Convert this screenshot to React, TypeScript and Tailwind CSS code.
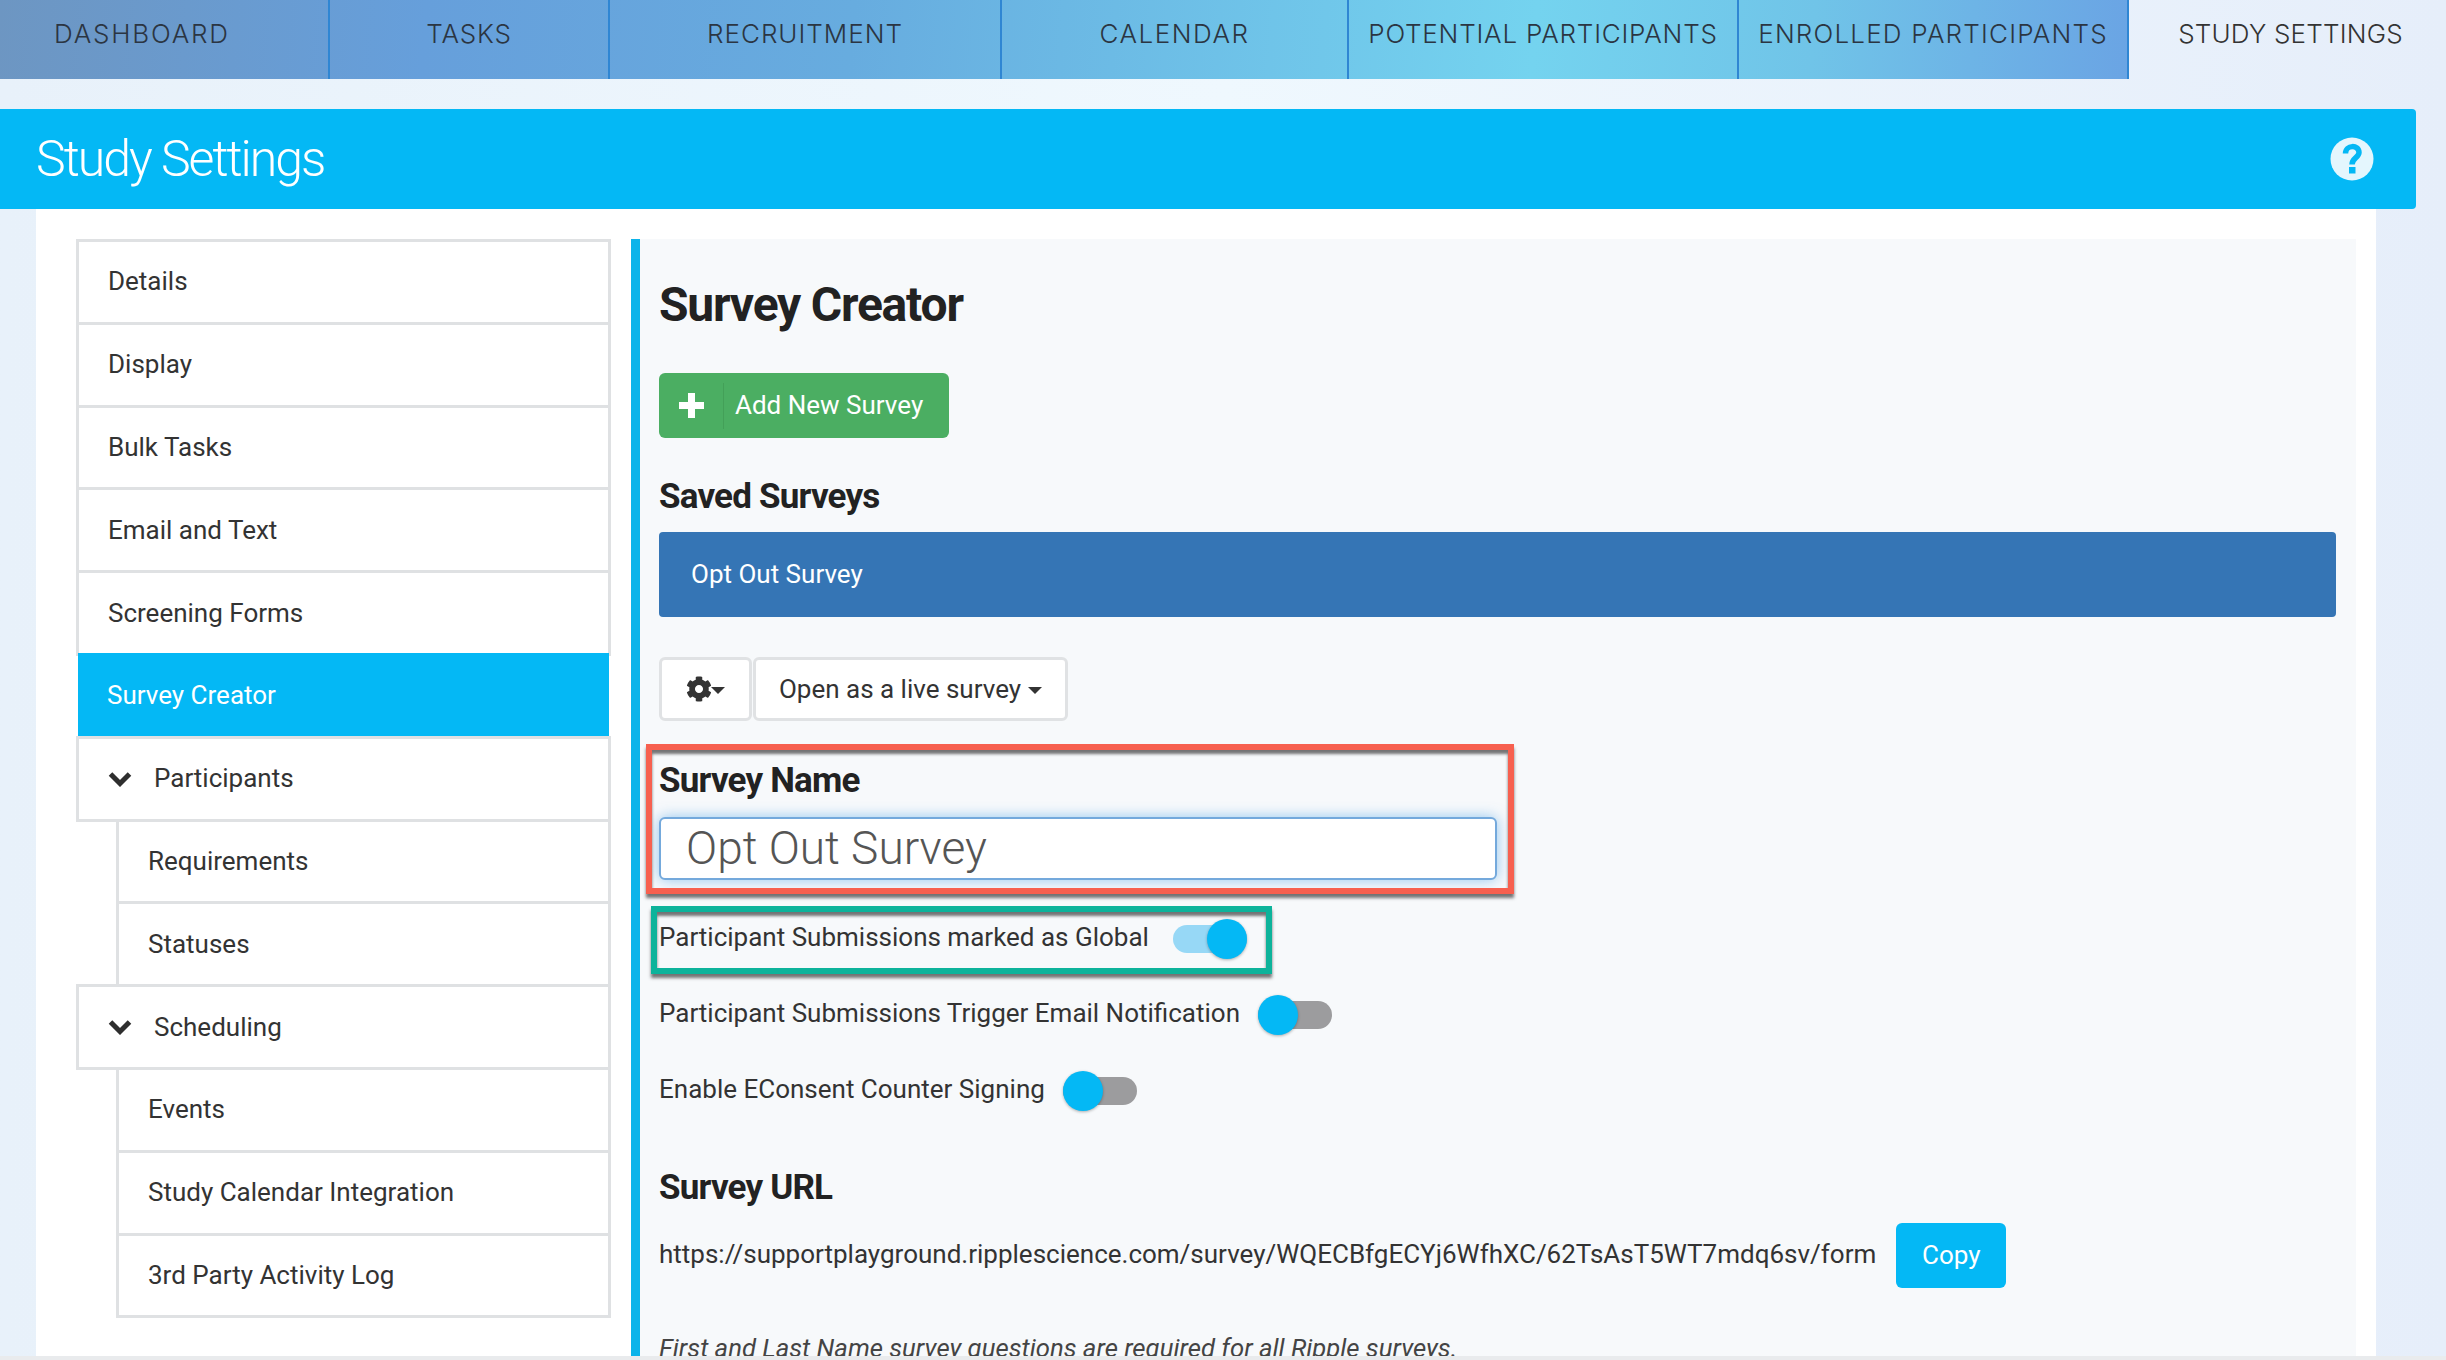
const TABS = [
  { label: "DASHBOARD", width: "w-[330px]", pad: "pl-[54px] justify-start", track: "tracking-[1.8px]" },
  { label: "TASKS", width: "w-[280px]", pad: "justify-center", track: "tracking-[0.8px]" },
  { label: "RECRUITMENT", width: "w-[392px]", pad: "justify-center", track: "tracking-[1px]" },
  { label: "CALENDAR", width: "w-[347px]", pad: "justify-center", track: "tracking-[1.5px]" },
  { label: "POTENTIAL PARTICIPANTS", width: "w-[390px]", pad: "justify-center", track: "tracking-[0.8px]" },
  { label: "ENROLLED PARTICIPANTS", width: "w-[390px]", pad: "justify-center", track: "tracking-[1.2px]" },
];

const SIDE_ITEMS = [
  { label: "Details" },
  { label: "Display" },
  { label: "Bulk Tasks" },
  { label: "Email and Text" },
  { label: "Screening Forms" },
  { label: "Survey Creator", active: true },
  { label: "Participants", group: true },
  { label: "Requirements", sub: true },
  { label: "Statuses", sub: true },
  { label: "Scheduling", group: true },
  { label: "Events", sub: true },
  { label: "Study Calendar Integration", sub: true },
  { label: "3rd Party Activity Log", sub: true },
];

function SideRow({ item }: { item: (typeof SIDE_ITEMS)[0] }) {
  if (item.active) {
    return (
      <div className="h-[85.8px] -mt-[3px] ml-[2px] mr-[2px] bg-[#04b8f5] text-white flex items-center pl-[29px]">
        {item.label}
      </div>
    );
  }
  return (
    <div
      className={`h-[85.8px] -mt-[3px] first:mt-0 border-[3px] border-[#dfe1e3] bg-white text-[#333] flex items-center ${
        item.sub ? "ml-[40px] pl-[29px]" : "pl-[29px]"
      }`}
    >
      {item.group && (
        <svg viewBox="0 0 24 16" className="w-[24px] h-[16px] mr-[22px]">
          <path d="M2.5 3 L12 12.5 L21.5 3" fill="none" stroke="#2e2e2e" strokeWidth="5" />
        </svg>
      )}
      {item.label}
    </div>
  );
}

function Toggle({ on }: { on?: boolean }) {
  return (
    <div className="relative w-[74px] h-[40px] flex items-center shrink-0">
      <div className={`w-full h-[28px] rounded-full ${on ? "bg-[#97d8f6]" : "bg-[#9c9c9e]"}`} />
      <div
        className={`absolute top-0 w-[40px] h-[40px] rounded-full bg-[#04b8f5] shadow-[0_1px_3px_rgba(0,0,0,0.3)] ${
          on ? "right-0" : "left-0"
        }`}
      />
    </div>
  );
}

function Caret({ className }: { className: string }) {
  return (
    <span
      className={`inline-block w-0 h-0 border-x-[7px] border-x-transparent border-t-[7px] border-t-[#333] ${className}`}
    />
  );
}

function GearIcon() {
  return (
    <svg viewBox="0 0 512 512" className="w-[26px] h-[26px]" fill="#333">
      <path d="M487.4 315.7l-42.6-24.6c4.3-23.2 4.3-47 0-70.2l42.6-24.6c4.9-2.8 7.1-8.6 5.5-14-11.1-35.6-30-67.8-54.7-94.6-3.8-4.1-10-5.1-14.8-2.3L380.8 110c-17.9-15.4-38.5-27.3-60.8-35.1V25.8c0-5.6-3.9-10.5-9.4-11.7-36.7-8.2-74.3-7.8-109.2 0-5.5 1.2-9.4 6.1-9.4 11.7V75c-22.2 7.9-42.8 19.8-60.8 35.1L88.7 85.5c-4.9-2.8-11-1.9-14.8 2.3-24.7 26.7-43.6 58.9-54.7 94.6-1.7 5.4.6 11.2 5.5 14L67.3 221c-4.3 23.2-4.3 47 0 70.2l-42.6 24.6c-4.9 2.8-7.1 8.6-5.5 14 11.1 35.6 30 67.8 54.7 94.6 3.8 4.1 10 5.1 14.8 2.3l42.6-24.6c17.9 15.4 38.5 27.3 60.8 35.1v49.2c0 5.6 3.9 10.5 9.4 11.7 36.7 8.2 74.3 7.8 109.2 0 5.5-1.2 9.4-6.1 9.4-11.7v-49.2c22.2-7.9 42.8-19.8 60.8-35.1l42.6 24.6c4.9 2.8 11 1.9 14.8-2.3 24.7-26.7 43.6-58.9 54.7-94.6 1.5-5.5-.7-11.3-5.6-14.1zM256 336c-44.1 0-80-35.9-80-80s35.9-80 80-80 80 35.9 80 80-35.9 80-80 80z" />
    </svg>
  );
}

export default function App() {
  return (
    <div
      className="relative w-[2446px] h-[1360px] overflow-hidden bg-gradient-to-r from-[#e8f1fa] via-[#eff8fe] to-[#e6eefa] text-[26px] text-[#333]"
      style={{ fontFamily: "Roboto, 'Liberation Sans', sans-serif" }}
    >
      {/* Top tabs */}
      <nav className="flex h-[79px]">
        <div className="flex bg-[linear-gradient(95deg,#6d96c2_0%,#669fdb_20%,#67acdf_40%,#74d3ef_72%,#70c4e8_85%,#6aa4e4_100%)]">
          {TABS.map((tab) => (
            <div
              key={tab.label}
              className={`${tab.width} ${tab.pad} ${tab.track} flex items-center pb-[12px] border-r-2 border-[#2f86d3] text-[26px] font-light text-[#2b3542]`}
              style={{ fontFamily: "Inter, sans-serif" }}
            >
              {tab.label}
            </div>
          ))}
        </div>
        <div
          className="flex-1 flex items-center justify-center pb-[12px] pl-[6px] text-[26px] font-light text-[#333] tracking-[0.2px]"
          style={{ fontFamily: "Inter, sans-serif" }}
        >
          STUDY SETTINGS
        </div>
      </nav>

      {/* Blue page header */}
      <header className="mt-[30px] w-[2416px] h-[100px] bg-[#04b8f5] rounded-r-[4px] flex items-center justify-between pl-[36px] pr-[42px]">
        <h1 className="text-[50px] font-light text-white tracking-[-2px]">Study Settings</h1>
        <svg viewBox="0 0 44 44" className="w-[44px] h-[44px]">
          <circle cx="22" cy="22" r="21.5" fill="#e4f6fd" />
          <path
            d="M15.5 16.5 C15.5 7.5 29 7.5 29 15.5 C29 20.5 22 21 22 27.5"
            fill="none"
            stroke="#04b8f5"
            strokeWidth="5.5"
          />
          <rect x="19" y="30" width="6.5" height="6.5" fill="#04b8f5" />
        </svg>
      </header>

      <main className="ml-[36px] w-[2340px] h-[1147px] bg-white flex pt-[30px] pl-[40px]">
        {/* Sidebar */}
        <aside className="w-[535px] shrink-0">
          {SIDE_ITEMS.map((item) => (
            <SideRow key={item.label} item={item} />
          ))}
        </aside>

        {/* Survey creator panel */}
        <section className="ml-[20px] w-[1725px] border-l-[9px] border-[#0cb4ea] bg-[#f7f9fb] pl-[19px] overflow-hidden">
          <h2 className="mt-[41px] h-[50px] leading-[50px] text-[48px] font-bold text-[#222] tracking-[-1.2px]">
            Survey Creator
          </h2>

          <button className="mt-[43px] w-[290px] h-[65px] rounded-[6px] bg-[#4bae62] text-white flex items-center">
            <span className="w-[65px] h-[46px] flex items-center justify-center border-r border-[#43a058]">
              <svg viewBox="0 0 25 25" className="w-[25px] h-[25px]">
                <path d="M9 0h7v9h9v7h-9v9H9v-9H0V9h9z" fill="#fff" />
              </svg>
            </span>
            <span className="ml-[11px]">Add New Survey</span>
          </button>

          <h3 className="mt-[39px] h-[40px] leading-[40px] text-[35px] font-bold text-[#222] tracking-[-0.8px]">
            Saved Surveys
          </h3>
          <div className="mt-[15px] w-[1677px] h-[85px] rounded-[4px] bg-[#3575b5] text-white flex items-center pl-[32px]">
            Opt Out Survey
          </div>

          <div className="mt-[40px] h-[64px] flex gap-[1px]">
            <button className="w-[93px] rounded-[6px] border-[3px] border-[#e0e2e4] bg-white flex items-center justify-center">
              <GearIcon />
              <Caret className="ml-[-1px] mt-[3px]" />
            </button>
            <button className="w-[315px] rounded-[6px] border-[3px] border-[#e0e2e4] bg-white flex items-center justify-center">
              Open as a live survey
              <Caret className="ml-[7px] mt-[3px]" />
            </button>
          </div>

          <h3 className="mt-[40px] h-[40px] leading-[40px] text-[35px] font-bold text-[#222] tracking-[-0.8px]">
            Survey Name
          </h3>
          <div className="mt-[16px] w-[838px] h-[63px] rounded-[6px] border-2 border-[#74a9dc] bg-white shadow-[0_0_14px_rgba(102,175,233,0.7)] flex items-center pl-[25px] text-[46px] font-light text-[#555]">
            Opt Out Survey
          </div>

          <div className="mt-[39px] flex items-center gap-[24px]">
            <span className="-mt-[3px]">Participant Submissions marked as Global</span>
            <Toggle on />
          </div>
          <div className="mt-[36px] flex items-center gap-[18px]">
            <span className="-mt-[3px]">Participant Submissions Trigger Email Notification</span>
            <Toggle />
          </div>
          <div className="mt-[36px] flex items-center gap-[18px]">
            <span className="-mt-[3px]">Enable EConsent Counter Signing</span>
            <Toggle />
          </div>

          <h3 className="mt-[57px] h-[40px] leading-[40px] text-[35px] font-bold text-[#222] tracking-[-0.8px]">
            Survey URL
          </h3>
          <div className="mt-[15px] flex items-center gap-[20px]">
            <span className="-mt-[3px]">
              https://supportplayground.ripplescience.com/survey/WQECBfgECYj6WfhXC/62TsAsT5WT7mdq6sv/form
            </span>
            <button className="w-[110px] h-[65px] rounded-[6px] bg-[#04b8f5] text-white">Copy</button>
          </div>
          <p className="mt-[40px] h-[40px] leading-[40px] italic text-[25.7px] text-[#444]">
            First and Last Name survey questions are required for all Ripple surveys.
          </p>
        </section>
      </main>

      {/* Bottom edge of the capture */}
      <div className="absolute left-0 right-0 bottom-0 h-[4px] bg-[#e9ebed]" />

      {/* Annotation boxes drawn on the screenshot */}
      <div className="absolute left-[646px] top-[744px] w-[868px] h-[150px] border-[6px] border-[#f7604f] shadow-[0_4px_3px_rgba(60,60,60,0.7),inset_0_4px_3px_rgba(60,60,60,0.7)]" />
      <div className="absolute left-[651px] top-[906px] w-[621px] h-[68px] border-[6px] border-[#0db39b] shadow-[0_4px_3px_rgba(60,60,60,0.7),inset_0_4px_3px_rgba(60,60,60,0.7)]" />
    </div>
  );
}
